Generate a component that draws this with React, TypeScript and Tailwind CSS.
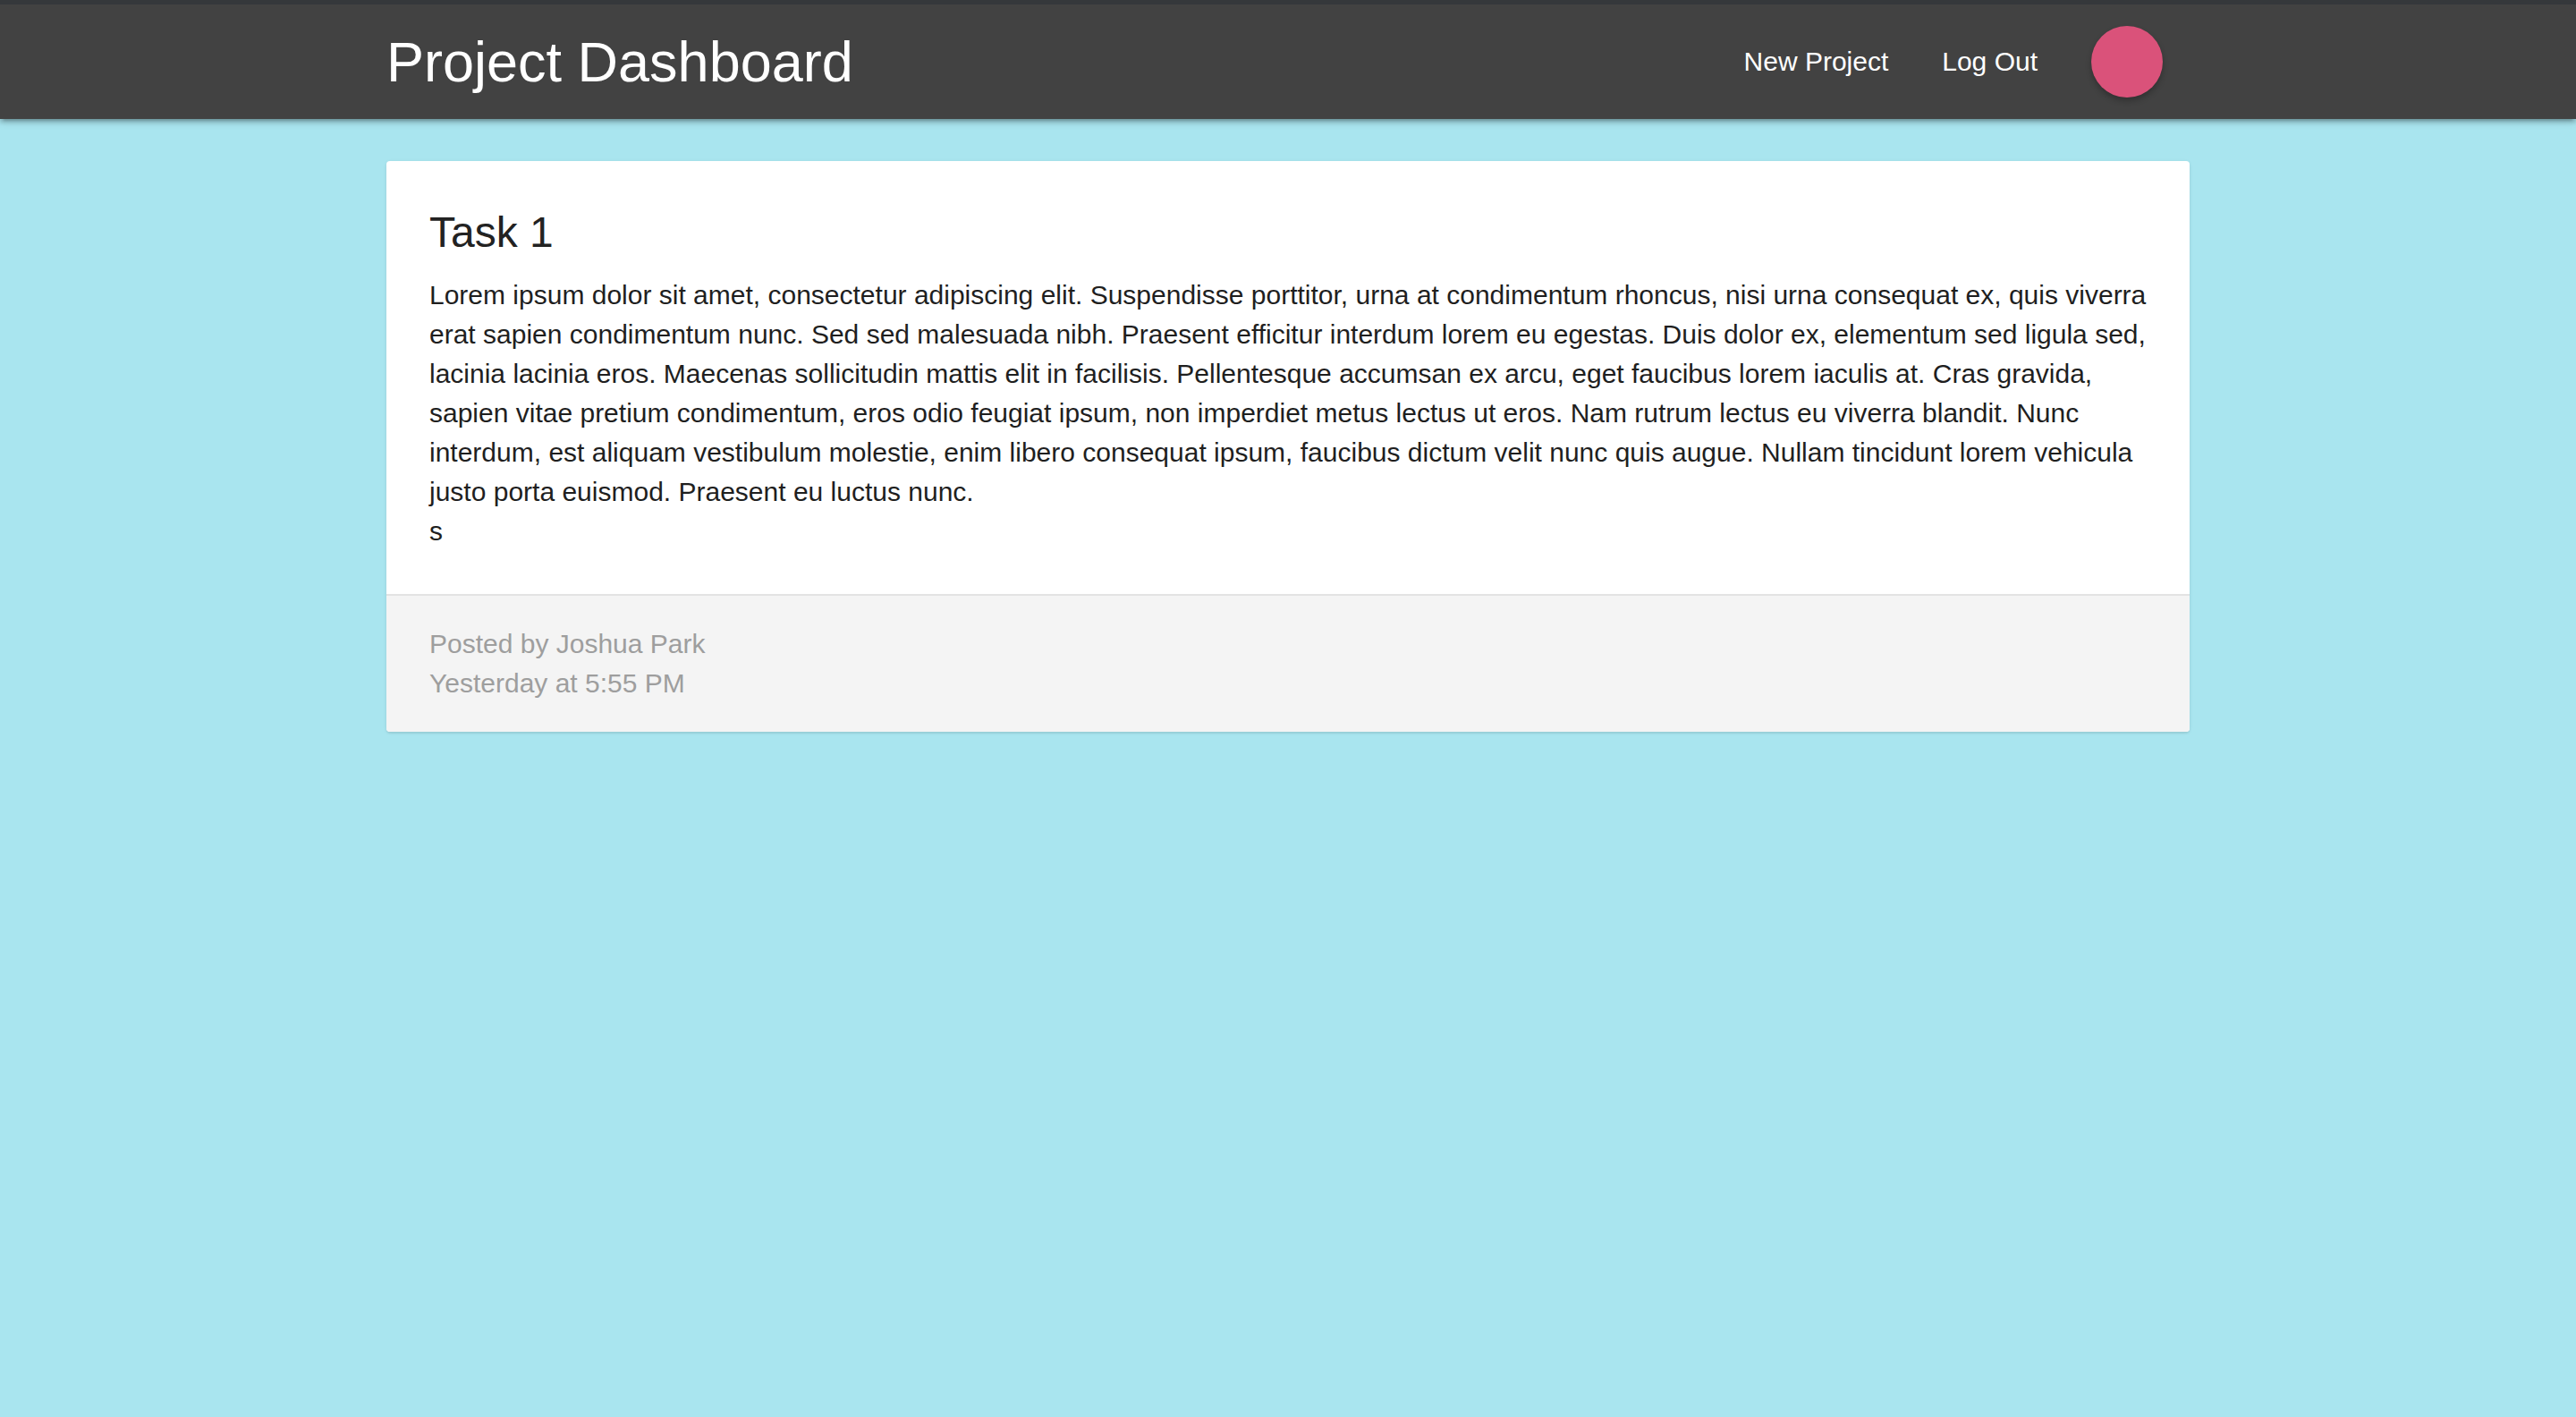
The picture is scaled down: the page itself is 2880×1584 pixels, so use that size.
import React from "react";

const bodyLines = [
  "Lorem ipsum dolor sit amet, consectetur adipiscing elit. Suspendisse porttitor, urna at condimentum rhoncus, nisi urna consequat ex, quis viverra",
  "erat sapien condimentum nunc. Sed sed malesuada nibh. Praesent efficitur interdum lorem eu egestas. Duis dolor ex, elementum sed ligula sed,",
  "lacinia lacinia eros. Maecenas sollicitudin mattis elit in facilisis. Pellentesque accumsan ex arcu, eget faucibus lorem iaculis at. Cras gravida,",
  "sapien vitae pretium condimentum, eros odio feugiat ipsum, non imperdiet metus lectus ut eros. Nam rutrum lectus eu viverra blandit. Nunc",
  "interdum, est aliquam vestibulum molestie, enim libero consequat ipsum, faucibus dictum velit nunc quis augue. Nullam tincidunt lorem vehicula",
  "justo porta euismod. Praesent eu luctus nunc.",
  "s",
];

export default function App() {
  return (
    <div className="min-h-screen bg-[#a9e5ef] font-['Liberation_Sans',Arial,sans-serif]">
      {/* HEADER */}
      <header className="relative z-10 shadow-[0_4px_4px_0_rgba(0,0,0,0.14),0_6px_2px_-4px_rgba(0,0,0,0.12),0_2px_10px_0_rgba(0,0,0,0.2)]">
        <div className="h-[5px] bg-[#35383b]" />
        <nav className="h-[128px] bg-[#424242]">
          <div className="w-[2016px] mx-auto h-full flex items-center justify-between">
            <a className="text-white text-[63px] leading-[128px]">Project Dashboard</a>
            <ul className="flex items-center h-full">
              <li>
                <a className="block px-[30px] text-white text-[30px] leading-[128px]">New Project</a>
              </li>
              <li>
                <a className="block px-[30px] text-white text-[30px] leading-[128px]">Log Out</a>
              </li>
              <li className="px-[30px] flex items-center">
                <div className="w-[80px] h-[80px] rounded-full bg-[#da527a] shadow-[0_4px_6px_0_rgba(0,0,0,0.25)]" />
              </li>
            </ul>
          </div>
        </nav>
      </header>

      {/* CARD */}
      <main className="w-[2016px] mx-auto pt-[47px]">
        <div className="bg-white rounded-[4px] overflow-hidden shadow-[0_2px_2px_0_rgba(0,0,0,0.06),0_1px_4px_0_rgba(0,0,0,0.08)]">
          <div className="p-[48px]">
            <div className="text-[48px] leading-[64px] mb-[16px] text-[#222222]">Task 1</div>
            <p className="text-[30px] leading-[44px] text-[#1f1f1f] whitespace-nowrap">
              {bodyLines.map((line, i) => (
                <React.Fragment key={i}>
                  {line}
                  {i < bodyLines.length - 1 && <br />}
                </React.Fragment>
              ))}
            </p>
          </div>
          <div className="border-t-2 border-[#e3e3e3] bg-[#f4f4f4] px-[48px] py-[32px] text-[30px] leading-[44px] text-[#9e9e9e]">
            <div>Posted by Joshua Park</div>
            <div>Yesterday at 5:55 PM</div>
          </div>
        </div>
      </main>
    </div>
  );
}
